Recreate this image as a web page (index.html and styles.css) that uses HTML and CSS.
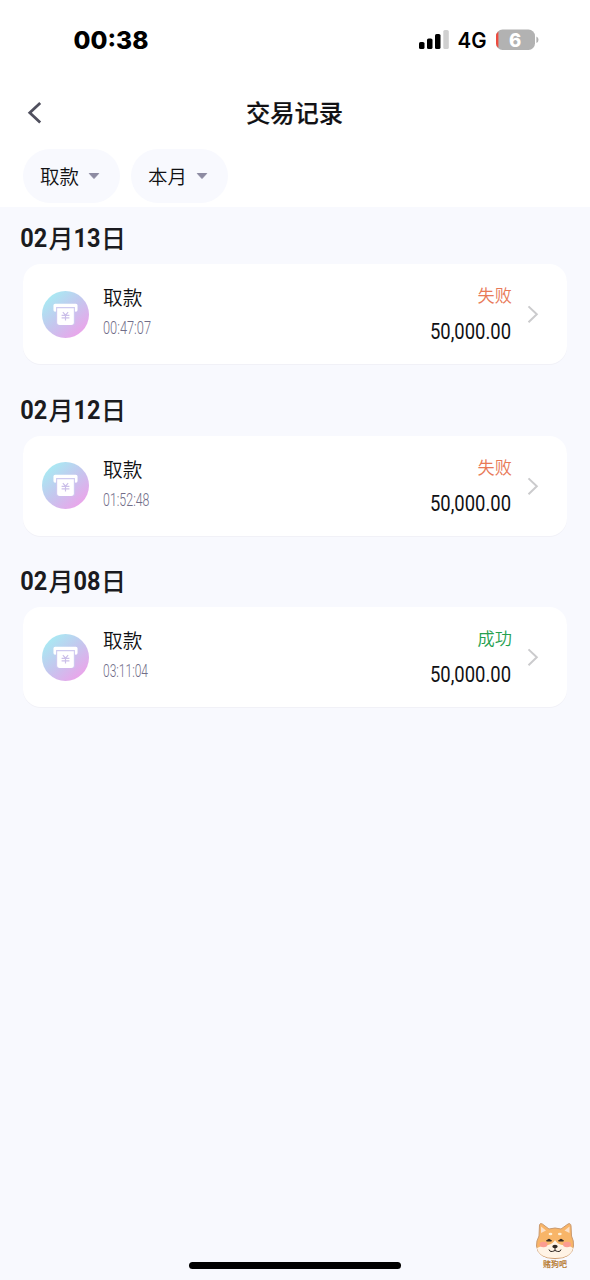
FILE: index.html
```html
<!DOCTYPE html>
<html lang="zh-CN">
<head>
<meta charset="utf-8">
<title>交易记录</title>
<link rel="stylesheet" href="styles.css">
</head>
<body>
<svg class="defs" width="0" height="0" aria-hidden="true">
  <defs>
    <linearGradient id="disc" x1="0.15" y1="0.1" x2="0.85" y2="0.9">
      <stop offset="0" stop-color="#a8eaf3"/>
      <stop offset="0.5" stop-color="#c5c6ee"/>
      <stop offset="1" stop-color="#eba4ea"/>
    </linearGradient>
    <symbol id="atm" viewBox="0 0 48 48">
      <circle cx="24" cy="24" r="24" fill="url(#disc)"/>
      <path d="M13.4 19.5V14.6H34.6V19.5" fill="none" stroke="#fff" stroke-width="3.4" stroke-linecap="round" stroke-linejoin="round"/>
      <path d="M14.4 16.3H33.6V31.8a3 3 0 0 1-3 3H17.4a3 3 0 0 1-3-3Z" fill="#cfcaf0"/>
      <path d="M15.5 17.5H32.5V32a2.8 2.8 0 0 1-2.8 2.8H18.3a2.8 2.8 0 0 1-2.8-2.8Z" fill="#fff"/>
      <path d="M21.3 21.6l2.7 3 2.7-3M20 24.9h8M20 27.4h8M24 24.6V30" fill="none" stroke="#cbbfe9" stroke-width="1.2"/>
    </symbol>
    <symbol id="next" viewBox="0 0 12 18">
      <path d="M1.5 1.4L9.8 9.3L1.5 17.2" fill="none" stroke="#cbcbcd" stroke-width="2"/>
    </symbol>
  </defs>
</svg>
<div class="screen">
  <header class="top">
    <div class="status">
      <svg class="clock" width="80" height="32"><text x="0.5" y="25" textLength="75" lengthAdjust="spacingAndGlyphs">00:38</text></svg>
      <div class="signals">
        <svg width="31" height="20" viewBox="0 0 31 20">
          <rect x="0" y="12" width="5.5" height="7" rx="1.6"/><rect x="8" y="8.5" width="5.5" height="10.5" rx="1.6"/><rect x="16" y="4" width="5.5" height="15" rx="1.6"/><rect x="24.3" y="0" width="5.5" height="19" rx="1.6" fill="#d0d0d0"/>
        </svg>
        <svg class="network" width="30" height="28"><text x="-0.5" y="22" textLength="29" lengthAdjust="spacingAndGlyphs">4G</text></svg>
        <svg class="battery" width="44" height="22" viewBox="0 0 44 22">
          <rect x="0" y="0.5" width="39" height="20.5" rx="6.5" fill="#b2b2b2"/>
          <path d="M2.4 2.6Q0 4.6 0 7V14.5Q0 17 2.4 19Z" fill="#ee4b3f"/>
          <path d="M40.4 7.5Q42.5 8.3 42.5 10.8T40.4 14Z" fill="#b2b2b2"/>
          <text x="19" y="17.6" text-anchor="middle">6</text>
        </svg>
      </div>
    </div>
    <nav class="nav">
      <svg class="back" width="16" height="24" viewBox="0 0 16 24"><path d="M15.2 2L4.8 11.7L15.2 21.4" fill="none" stroke="#50505e" stroke-width="2.8"/></svg>
      <h1>交易记录</h1>
    </nav>
    <div class="filters">
      <div class="chip">取款<svg width="12" height="8"><path d="M1.3 1.5H10.7L6 6.5Z" fill="#8d8ba2" stroke="#8d8ba2" stroke-linejoin="round"/></svg></div>
      <div class="chip">本月<svg width="12" height="8"><path d="M1.3 1.5H10.7L6 6.5Z" fill="#8d8ba2" stroke="#8d8ba2" stroke-linejoin="round"/></svg></div>
    </div>
  </header>
  <main class="list">
    <section class="day">
      <svg class="date" width="108" height="30"><text x="0.3" y="23.3" textLength="27" lengthAdjust="spacingAndGlyphs">02</text><text class="han" x="28.5" y="24">月</text><text x="53.5" y="23.3" textLength="27" lengthAdjust="spacingAndGlyphs">13</text><text class="han" x="81" y="24">日</text></svg>
      <article class="card">
        <svg class="icon"><use href="#atm"/></svg>
        <div class="what"><span class="kind">取款</span><svg class="time" width="52" height="24"><text x="0" y="19.3" textLength="48" lengthAdjust="spacingAndGlyphs">00:47:07</text></svg></div>
        <div class="sum"><span class="state fail">失败</span><svg class="amount" width="82" height="30"><text x="1" y="24" textLength="81" lengthAdjust="spacingAndGlyphs">50,000.00</text></svg></div>
        <svg class="arrow"><use href="#next"/></svg>
      </article>
    </section>
    <section class="day">
      <svg class="date" width="108" height="30"><text x="0.3" y="23.3" textLength="27" lengthAdjust="spacingAndGlyphs">02</text><text class="han" x="28.5" y="23.5">月</text><text x="53.5" y="23.3" textLength="27" lengthAdjust="spacingAndGlyphs">12</text><text class="han" x="81" y="23.5">日</text></svg>
      <article class="card">
        <svg class="icon"><use href="#atm"/></svg>
        <div class="what"><span class="kind">取款</span><svg class="time" width="52" height="24"><text x="0" y="19.3" textLength="46.5" lengthAdjust="spacingAndGlyphs">01:52:48</text></svg></div>
        <div class="sum"><span class="state fail">失败</span><svg class="amount" width="82" height="30"><text x="1" y="24" textLength="81" lengthAdjust="spacingAndGlyphs">50,000.00</text></svg></div>
        <svg class="arrow"><use href="#next"/></svg>
      </article>
    </section>
    <section class="day">
      <svg class="date" width="108" height="30"><text x="0.3" y="23.3" textLength="27" lengthAdjust="spacingAndGlyphs">02</text><text class="han" x="28.5" y="24">月</text><text x="53.5" y="23.3" textLength="27" lengthAdjust="spacingAndGlyphs">08</text><text class="han" x="81" y="24">日</text></svg>
      <article class="card">
        <svg class="icon"><use href="#atm"/></svg>
        <div class="what"><span class="kind">取款</span><svg class="time" width="52" height="24"><text x="0" y="19.3" textLength="45" lengthAdjust="spacingAndGlyphs">03:11:04</text></svg></div>
        <div class="sum"><span class="state ok">成功</span><svg class="amount" width="82" height="30"><text x="1" y="24" textLength="81" lengthAdjust="spacingAndGlyphs">50,000.00</text></svg></div>
        <svg class="arrow"><use href="#next"/></svg>
      </article>
    </section>
  </main>
  <div class="home"></div>
  <div class="mascot">
    <svg width="40" height="38" viewBox="0 0 40 38">
      <path d="M4 14L4.5 3Q5 .6 7.4 2L14 7Q20 5 26 7L33 2Q35.6.7 36 4L36.5 14Q39 19 38.5 24Q37 36.5 20 36.5T1.5 24Q1.2 19 4 14Z" fill="#f8b568" stroke="#c99a70" stroke-width="1"/>
      <path d="M6 11V4.5L11 8.5ZM34.5 11V4.5L29.5 8.5Z" fill="#fbe0c8"/>
      <path d="M2 26Q7 23 13 23Q18 22 20 18Q22 22 27 23Q34 23 38 26Q36 36 20 36T2 26Z" fill="#fff3e5"/>
      <ellipse cx="15.5" cy="12" rx="1.9" ry="1.3" fill="#fff0d8"/><ellipse cx="24.8" cy="12" rx="1.9" ry="1.3" fill="#fff0d8"/>
      <ellipse cx="8.5" cy="22.5" rx="4" ry="2.8" fill="#fb9c91"/><ellipse cx="32" cy="22.5" rx="4" ry="2.8" fill="#fb9c91"/>
      <path d="M11.5 19Q14 15.5 16.5 19ZM23.5 19Q26 15.5 28.5 19Z" fill="#302824" stroke="#302824"/>
      <ellipse cx="20" cy="24.5" rx="2.7" ry="1.8" fill="#302824"/>
      <path d="M14 27.5Q15 31 20 28.5Q25 31 26 27.5M20 25V28.5" fill="none" stroke="#302824" stroke-width="1"/>
    </svg>
    <span>赌狗吧</span>
  </div>
</div>
</body>
</html>
```

FILE: styles.css
```css
* { box-sizing: border-box; }
body {
  margin: 0;
  background: #f8f9fe;
  font-family: "Noto Sans CJK SC", sans-serif;
  color: #111114;
}
svg { display: block; flex: none; overflow: visible; }
.defs { position: absolute; }
.screen {
  position: relative;
  width: 590px;
  height: 1280px;
  overflow: hidden;
  background: #f8f9fe;
}
.top { height: 207px; background: #fff; }
.status {
  display: flex;
  justify-content: space-between;
  align-items: center;
  height: 80px;
  padding: 0 50px 0 73px;
}
.clock text { font: 800 24.5px Inter, sans-serif; fill: #000; }
.signals { display: flex; align-items: center; }
.network { margin-left: 8px; }
.network text { font: 600 21px Inter, sans-serif; fill: #000; }
.battery { margin-left: 8px; }
.battery text { font: 800 18.5px Inter, sans-serif; fill: #fff; }
.nav {
  display: grid;
  grid-template-columns: 40px 1fr 40px;
  align-items: center;
  height: 66px;
  padding: 0 26px 0 25px;
}
.nav h1 {
  margin: -3px 0 0;
  font-size: 24.3px;
  line-height: 36px;
  font-weight: 500;
  text-align: center;
  -webkit-text-stroke: 0.2px #111114;
}
.filters { display: flex; gap: 11px; padding: 3px 23px 0; }
.chip {
  display: flex;
  align-items: center;
  gap: 9px;
  width: 97px;
  height: 54px;
  padding-left: 17px;
  border-radius: 27px;
  background: #f8f9fe;
  font-size: 19.5px;
  line-height: 30px;
  font-weight: 350;
}
.list { padding: 17px 23px 0; }
.day { height: 171.5px; }
.date { margin: 0 0 10px -3px; }
.date text { font: 700 25.5px Roboto, sans-serif; fill: #1b1b20; }
.date .han { font: 500 25px "Noto Sans CJK SC", sans-serif; }
.card {
  display: flex;
  height: 100px;
  padding: 0 28px 0 19px;
  align-items: center;
  border-radius: 18px;
  background: #fff;
  box-shadow: 0 1px 0 #f1f1f7;
}
.icon { width: 47px; height: 47px; }
.what { margin: -7px 0 0 14px; }
.kind { display: block; font-size: 19.7px; line-height: 30px; font-weight: 350; }
.time { margin-top: 3px; }
.time text { font: 300 17.8px Roboto, sans-serif; fill: #716d88; }
.sum {
  display: flex;
  flex-direction: column;
  align-items: flex-end;
  margin: -1px 0 0 auto;
}
.state { margin-right: -1px; font-size: 17.2px; line-height: 26px; font-weight: 350; }
.fail { color: #e87958; }
.ok { color: #25a04e; }
.amount { margin-top: 7px; }
.amount text { font: 400 22.8px Roboto, sans-serif; fill: #111114; }
.arrow { width: 12px; height: 18px; margin-left: 16px; }
.home {
  position: absolute;
  left: 189px;
  top: 1262px;
  width: 212px;
  height: 7px;
  border-radius: 4px;
  background: #000;
}
.mascot {
  position: absolute;
  left: 535px;
  top: 1222px;
  display: flex;
  flex-direction: column;
  align-items: center;
  width: 40px;
}
.mascot span {
  margin-top: -1px;
  font-size: 8px;
  line-height: 9px;
  font-weight: 700;
  color: #b9803b;
}
```
